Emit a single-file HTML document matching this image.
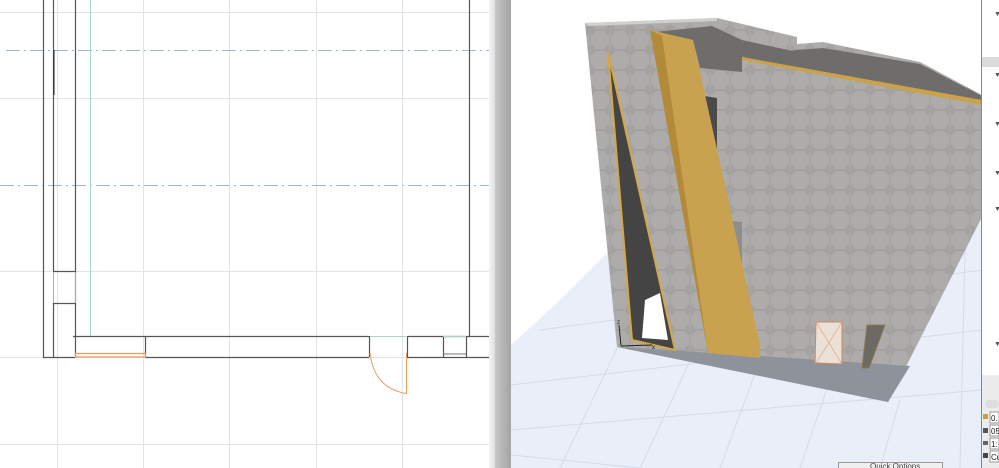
<!DOCTYPE html>
<html><head><meta charset="utf-8"><style>
html,body{margin:0;padding:0;width:999px;height:468px;overflow:hidden;background:#fff;font-family:"Liberation Sans",sans-serif}
svg{position:absolute;left:0;top:0}
</style></head><body>
<svg width="999" height="468" viewBox="0 0 999 468" xmlns="http://www.w3.org/2000/svg">
<defs>
<linearGradient id="dv" x1="0" x2="1"><stop offset="0" stop-color="#f4f4f4"/><stop offset="0.25" stop-color="#e2e2e2"/><stop offset="0.3" stop-color="#c4c4c4"/><stop offset="1" stop-color="#a4a4a4"/></linearGradient>
<pattern id="cc" width="20" height="20" patternUnits="userSpaceOnUse"><rect width="20" height="20" fill="#aeacab"/><circle cx="10" cy="10" r="5" fill="#a3a1a0"/><rect x="0" y="9" width="20" height="2" fill="#a5a3a2"/><rect x="9" y="0" width="2" height="20" fill="#a7a5a4"/></pattern>
</defs>
<g stroke="#e3e3e3" stroke-width="1">
<line x1="57.5" y1="0" x2="57.5" y2="468"/><line x1="143.5" y1="0" x2="143.5" y2="468"/><line x1="229.5" y1="0" x2="229.5" y2="468"/><line x1="316.5" y1="0" x2="316.5" y2="468"/><line x1="402.5" y1="0" x2="402.5" y2="468"/>
<line x1="0" y1="12.5" x2="490" y2="12.5"/><line x1="0" y1="98.5" x2="490" y2="98.5"/><line x1="0" y1="271.5" x2="490" y2="271.5"/><line x1="0" y1="444.5" x2="490" y2="444.5"/><line x1="0" y1="357.5" x2="490" y2="357.5"/>
</g>
<g stroke="#9fb7cf" stroke-width="1" stroke-dasharray="14 4 2 4">
<line x1="6" y1="50.5" x2="510" y2="50.5"/><line x1="0" y1="185.5" x2="510" y2="185.5"/>
</g>
<line x1="90.5" y1="0" x2="90.5" y2="336" stroke="#a8d4cc"/>
<g stroke="#555" stroke-width="1.2" fill="none">
<line x1="43.5" y1="0" x2="43.5" y2="357.5"/>
<line x1="53.5" y1="0" x2="53.5" y2="271"/><line x1="53.5" y1="303" x2="53.5" y2="357.5"/>
<line x1="75.5" y1="0" x2="75.5" y2="357.5"/>
<line x1="53" y1="271.5" x2="75" y2="271.5"/><line x1="53" y1="303.5" x2="75" y2="303.5"/>
<line x1="73" y1="336.5" x2="369" y2="336.5"/><line x1="407" y1="336.5" x2="470" y2="336.5"/>
<line x1="43" y1="357.5" x2="75" y2="357.5"/><line x1="145" y1="357.5" x2="369" y2="357.5"/><line x1="407" y1="357.5" x2="510" y2="357.5"/>
<line x1="145.5" y1="336" x2="145.5" y2="357"/><line x1="369.5" y1="336" x2="369.5" y2="357"/><line x1="407.5" y1="336" x2="407.5" y2="357"/><line x1="443.5" y1="336" x2="443.5" y2="357"/><line x1="466.5" y1="336" x2="466.5" y2="357"/>
<line x1="469.5" y1="0" x2="469.5" y2="336"/><line x1="493.5" y1="0" x2="493.5" y2="336"/><line x1="469" y1="336.5" x2="493" y2="336.5"/>
</g>
<line x1="54" y1="50" x2="54" y2="95" stroke="#222"/>
<line x1="370" y1="336.5" x2="406" y2="336.5" stroke="#a8d4cc"/><line x1="443" y1="336.5" x2="466" y2="336.5" stroke="#a8d4cc"/>
<line x1="443" y1="354" x2="466" y2="354" stroke="#777"/>
<g stroke="#f09a5a" fill="none" stroke-width="1">
<line x1="53.5" y1="272" x2="53.5" y2="303"/><line x1="75.5" y1="272" x2="75.5" y2="303"/>
<rect x="75.5" y="353.5" width="70" height="3.5" stroke-width="1.3"/>
<path d="M370 353 Q374 388 406 393.5"/><line x1="406.5" y1="353" x2="406.5" y2="394"/>
</g>
<rect x="489" y="0" width="22" height="468" fill="url(#dv)"/>
<rect x="511" y="0" width="471" height="468" fill="#fff"/>
<polygon points="511,345 560,300 613,247 982,200 982,468 511,468" fill="#e9eef9"/>
<g stroke="#d3dbea" stroke-width="1">
<line x1="511" y1="385" x2="982" y2="330"/><line x1="511" y1="430" x2="982" y2="390"/><line x1="540" y1="330" x2="982" y2="270"/>
<line x1="560" y1="468" x2="640" y2="300"/><line x1="640" y1="468" x2="700" y2="340"/><line x1="720" y1="468" x2="760" y2="360"/><line x1="800" y1="468" x2="830" y2="380"/><line x1="880" y1="468" x2="900" y2="400"/><line x1="960" y1="468" x2="965" y2="250"/>
<line x1="511" y1="455" x2="640" y2="468"/>
</g>
<polygon points="585,23 717,18 797,37 797,44 823,42 920,62 982,95 982,217 888,402 617,347" fill="url(#cc)"/>
<polygon points="585,23 717,18 717,21 588,26" fill="#d0d0d0"/>
<polygon points="617,347 760,356 910,366 888,402" fill="#8e929b"/>
<polygon points="655,32 712,26 742,40 797,52 742,57 742,72 700,68 693,40" fill="#6e6d6c"/>
<polygon points="797,50 823,48 920,64 982,96 982,103 742,57" fill="#6e6d6c"/>
<polygon points="742,57 982,100 982,105 742,60" fill="#c9a24a"/>
<polygon points="698,95 717,98 717,290 706,320" fill="#4a4a4a"/>
<polygon points="716,220 742,222 742,340 720,345" fill="#8d8d8e"/>
<polygon points="650,30 693,40 760,345 760,358 708,353" fill="#c9a24f"/>
<polygon points="650,30 662,36 708,353" fill="#b28a3a"/>
<polygon points="608,52 675,350 632,340" fill="#444" stroke="#d5a648" stroke-width="2"/>
<polygon points="645,300 660,293 668,340 642,338" fill="#fff"/>
<polygon points="816,322 842,322 842,364 815,363" fill="#ebe1d9" stroke="#c98a5a"/>
<line x1="816" y1="322" x2="842" y2="364" stroke="#e4a070" stroke-width="0.7"/><line x1="842" y1="322" x2="816" y2="363" stroke="#e4a070" stroke-width="0.7"/>
<polygon points="867,325 885,325 869,368 862,368" fill="#6c6a62" stroke="#8a7a52"/>
<g stroke="#222" stroke-width="1" fill="none"><line x1="619" y1="325" x2="621" y2="346"/><line x1="621" y1="346" x2="652" y2="345"/></g>
<text x="617" y="324" font-size="6" fill="#222">z</text><text x="652" y="349" font-size="6" fill="#222">x</text>
<rect x="838.5" y="462.5" width="104" height="8" fill="#f0f0f0" stroke="#999"/>
<text x="870" y="469" font-size="8" fill="#444">Quick Options</text>
<rect x="982" y="0" width="17" height="468" fill="#fff"/>
<line x1="981.5" y1="0" x2="981.5" y2="468" stroke="#888"/>
<rect x="982" y="57" width="17" height="10" fill="#dadada"/>
<g font-size="7" fill="#555">
<text x="994" y="16">▼</text><text x="994" y="77">▼</text><text x="994" y="126">▼</text><text x="994" y="175">▼</text><text x="994" y="211">▼</text><text x="994" y="346">▼</text>
</g>
<rect x="982" y="375" width="17" height="93" fill="#ececec"/>
<rect x="985" y="400" width="14" height="8" rx="4" fill="#ddd"/>
<g font-size="8" fill="#222">
<rect x="990" y="412" width="9" height="11" fill="#fff" stroke="#999"/><text x="991" y="421">0.</text>
<rect x="990" y="425" width="9" height="11" fill="#fff" stroke="#999"/><text x="991" y="434">05</text>
<rect x="990" y="438" width="9" height="11" fill="#fff" stroke="#999"/><text x="991" y="447">1:</text>
<rect x="990" y="451" width="9" height="11" fill="#fff" stroke="#999"/><text x="991" y="460">Cu</text>
</g>
<rect x="983" y="414" width="5" height="5" fill="#c9a23a"/><rect x="983" y="428" width="5" height="5" fill="#555"/><rect x="983" y="441" width="5" height="4" fill="#666"/><rect x="983" y="453" width="5" height="5" fill="#444"/>
</svg>
</body></html>
